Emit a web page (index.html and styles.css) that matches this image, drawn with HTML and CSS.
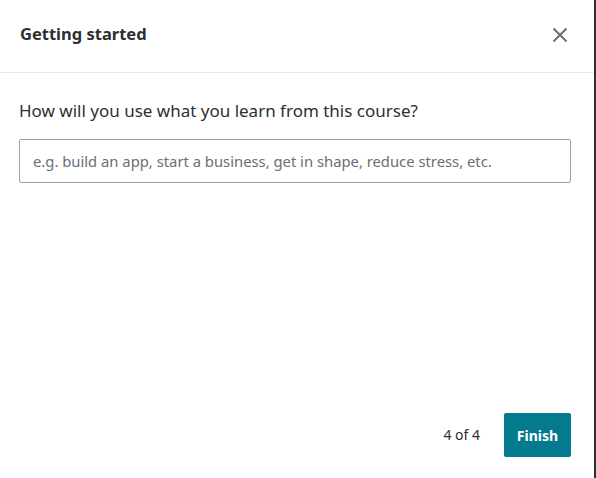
FILE: index.html
```html
<!DOCTYPE html>
<html>
<head>
<meta charset="utf-8">
<link rel="stylesheet" href="styles.css">
</head>
<body>
<div class="modal">
  <div class="header">
    <h2 class="title">Getting started</h2>
    <button class="close" aria-label="Close">
      <svg width="16" height="16" viewBox="0 0 16 16"><path d="M1.5 1.5 L14.5 14.5 M14.5 1.5 L1.5 14.5" stroke="#6a6f73" stroke-width="2" fill="none"/></svg>
    </button>
  </div>
  <div class="content">
    <label class="question" for="q">How will you use what you learn from this course?</label>
    <input id="q" class="field" type="text" placeholder="e.g. build an app, start a business, get in shape, reduce stress, etc.">
  </div>
  <div class="footer">
    <span class="step">4 of 4</span>
    <button class="finish">Finish</button>
  </div>
</div>
</body>
</html>
```
FILE: styles.css
```css
html, body {
  margin: 0;
  padding: 0;
  background: #ffffff;
}
body {
  font-family: "Noto Sans", "Open Sans", sans-serif;
  color: #2d2f31;
}
.modal {
  width: 594px;
  height: 478px;
  border-right: 2px solid #2d2f31;
  display: flex;
  flex-direction: column;
  box-sizing: content-box;
}
.header {
  height: 73px;
  border-bottom: 1px solid #e8e8e8;
  display: flex;
  align-items: center;
  justify-content: space-between;
  padding: 0 26px 0 20px;
  box-sizing: border-box;
}
.title {
  margin: 0;
  font-size: 16.5px;
  font-weight: 700;
  color: #2d2f31;
  padding-bottom: 6px;
}
.close {
  border: 0;
  background: none;
  padding: 0;
  width: 16px;
  height: 16px;
  display: flex;
  margin-bottom: 3px;
}
.content {
  flex: 1;
  display: flex;
  flex-direction: column;
  padding: 26px 23px 0 19px;
}
.question {
  font-size: 17px;
  line-height: 24px;
  color: #2d2f31;
}
.field {
  margin-top: 16px;
  height: 44px;
  box-sizing: border-box;
  border: 1px solid #9da3a7;
  border-radius: 2px;
  padding: 0 13px;
  font-family: inherit;
  font-size: 14.8px;
  color: #2d2f31;
  outline: none;
}
.field::placeholder {
  color: #6a6f73;
}
.footer {
  display: flex;
  align-items: center;
  justify-content: flex-end;
  padding: 0 23px 21px 0;
  gap: 24px;
}
.step {
  font-size: 14px;
  color: #2d2f31;
  margin-bottom: 2px;
}
.finish {
  height: 44px;
  width: 67px;
  border: 0;
  border-radius: 2px;
  background: #047a8f;
  color: #ffffff;
  font-family: inherit;
  font-size: 14px;
  font-weight: 700;
  padding: 0;
}
```
